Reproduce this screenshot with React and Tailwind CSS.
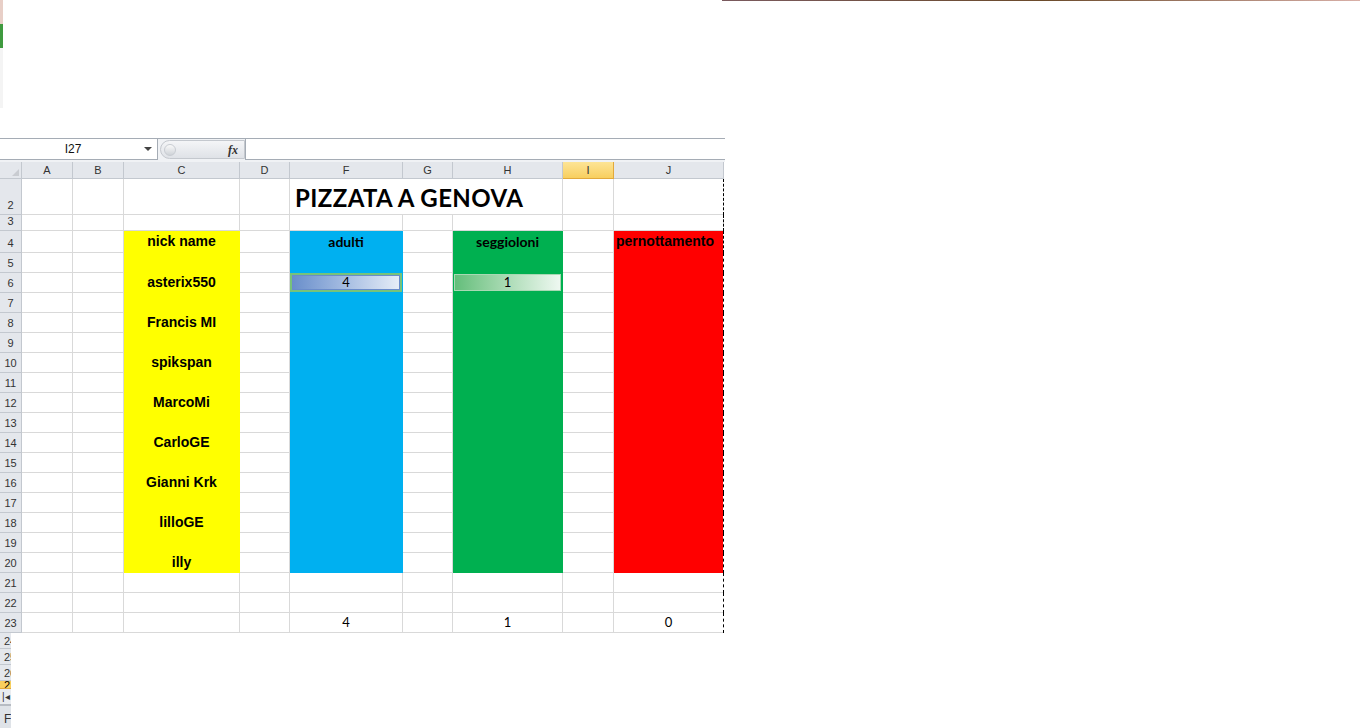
import React from 'react';

const cols = [
  { id: 'A', w: 'w-[51px]' },
  { id: 'B', w: 'w-[51px]' },
  { id: 'C', w: 'w-[116px]' },
  { id: 'D', w: 'w-[50px]' },
  { id: 'F', w: 'w-[113px]' },
  { id: 'G', w: 'w-[50px]' },
  { id: 'H', w: 'w-[110px]' },
  { id: 'I', w: 'w-[51px]' },
  { id: 'J', w: 'w-[110px]' },
];

const fills = {
  C: 'bg-[#ffff00] border-[#ffff00]',
  F: 'bg-[#00b0f0] border-[#00b0f0]',
  H: 'bg-[#00b050] border-[#00b050]',
  J: 'bg-[#ff0000] border-[#ff0000]',
};

const names = {
  4: 'nick name',
  6: 'asterix550',
  8: 'Francis MI',
  10: 'spikspan',
  12: 'MarcoMi',
  14: 'CarloGE',
  16: 'Gianni Krk',
  18: 'lilloGE',
  20: 'illy',
};

const rows = [{ n: 2, h: 'h-[36px]' }, { n: 3, h: 'h-[16px]' }, { n: 4, h: 'h-[22px]' }];
for (let n = 5; n <= 23; n++) rows.push({ n, h: 'h-[20px]' });

const calibri = { fontFamily: 'Lato, "Open Sans", sans-serif' };
const arial = { fontFamily: '"Liberation Sans", Arial, sans-serif' };

function RowHeader({ n, h }) {
  return (
    <div
      className={`${h} w-[22px] shrink-0 flex items-end justify-center pb-[1px] bg-[#e4e7ec] border-r border-b border-[#c3c8cf] text-[11px] text-[#333]`}
      style={arial}
    >
      {n}
    </div>
  );
}

function cellContent(col, n) {
  if (col === 'C' && names[n]) {
    return (
      <span className="text-[14px] font-bold text-black" style={arial}>
        {names[n]}
      </span>
    );
  }
  if (n === 4 && col === 'F') return <span className="text-[14px] font-bold" style={calibri}>adulti</span>;
  if (n === 4 && col === 'H') return <span className="text-[14px] font-bold" style={calibri}>seggioloni</span>;
  if (n === 6 && col === 'F') {
    return (
      <div className="w-full h-full border-2 border-[#77c27a]">
        <div className="w-full h-full border border-[#6a8ccb] bg-gradient-to-r from-[#6a8fcb] to-[#e6edf7] flex items-center justify-center text-[13px]" style={calibri}>
          4
        </div>
      </div>
    );
  }
  if (n === 6 && col === 'H') {
    return (
      <div className="w-full h-full p-[1px]">
        <div className="w-full h-full border border-[#a8d9b3] bg-gradient-to-r from-[#63be7b] to-[#eef8f1] flex items-center justify-center text-[13px]" style={calibri}>
          1
        </div>
      </div>
    );
  }
  if (n === 23 && col === 'F') return <span className="text-[13px]" style={calibri}>4</span>;
  if (n === 23 && col === 'H') return <span className="text-[13px]" style={calibri}>1</span>;
  if (n === 23 && col === 'J') return <span className="text-[13px]" style={calibri}>0</span>;
  return null;
}

function Row({ n, h }) {
  if (n === 2) {
    return (
      <div className="flex">
        <RowHeader n={n} h={h} />
        <div className={`${h} w-[51px] border-r border-b border-[#d9d9d9]`} />
        <div className={`${h} w-[51px] border-r border-b border-[#d9d9d9]`} />
        <div className={`${h} w-[116px] border-r border-b border-[#d9d9d9]`} />
        <div className={`${h} w-[50px] border-r border-b border-[#d9d9d9]`} />
        <div className={`${h} w-[273px] border-r border-b border-[#d9d9d9] flex items-center pl-[5px] pt-[2px]`}>
          <span className="text-[24px] font-bold text-black tracking-[0.4px]" style={calibri}>
            PIZZATA A GENOVA
          </span>
        </div>
        <div className={`${h} w-[51px] border-r border-b border-[#d9d9d9]`} />
        <div className={`${h} w-[109px] border-b border-[#d9d9d9]`} />
        <div className={`${h} w-0 border-l border-dashed border-black`} />
      </div>
    );
  }
  return (
    <div className="flex">
      <RowHeader n={n} h={h} />
      {cols.map((c) => {
        const filled = fills[c.id] && n >= 4 && n <= 20;
        const base = filled ? fills[c.id] : 'border-[#d9d9d9]';
        const w = c.id === 'J' ? 'w-[109px]' : c.w;
        const br = c.id === 'J' ? '' : 'border-r';
        if (c.id === 'J' && n === 4) {
          return (
            <div key={c.id} className={`${h} ${w} ${base} border-b overflow-hidden flex items-center pl-[2px]`}>
              <span className="text-[14px] font-bold whitespace-nowrap" style={arial}>pernottamento</span>
            </div>
          );
        }
        return (
          <div key={c.id} className={`${h} ${w} ${base} ${br} border-b flex items-center justify-center`}>
            {cellContent(c.id, n)}
          </div>
        );
      })}
      <div className={`${h} w-0 border-l border-dashed border-black`} />
    </div>
  );
}

export default function App() {
  return (
    <div className="w-[1360px] h-[728px] bg-white overflow-hidden flex flex-col" style={arial}>
      {/* window remnants at the top */}
      <div className="h-[138px] flex">
        <div className="w-[3px] flex flex-col">
          <div className="h-[24px] bg-[#e8cfc7]" />
          <div className="h-[24px] bg-[#3f9a3f]" />
          <div className="h-[60px] bg-[#f4f4f4]" />
        </div>
        <div className="w-[719px]" />
        <div className="w-[638px] h-px bg-gradient-to-r from-[#7a5a5e] via-[#6b4a2a] to-[#d9b0a8]" />
      </div>

      {/* formula bar */}
      <div className="w-[725px] h-[24px] flex border-t border-[#a5acb5] bg-[#f0f2f5]">
        <div className="w-[158px] h-[21px] bg-white border-r border-b border-[#a5acb5] flex items-center">
          <span className="flex-1 text-center text-[12px] text-[#111] pl-[2px]">I27</span>
          <span className="w-0 h-0 border-l-[4px] border-r-[4px] border-t-[4px] border-l-transparent border-r-transparent border-t-[#444] mr-[5px]" />
        </div>
        <div className="w-[87px] h-[21px] flex items-center pl-[2px]">
          <div className="flex-1 h-[19px] rounded-l-full bg-gradient-to-b from-[#f4f5f7] to-[#dfe2e7] border border-[#c4c8ce] flex items-center justify-between pl-[3px] pr-[6px]">
            <span className="w-[12px] h-[12px] rounded-full bg-gradient-to-b from-[#fafafa] to-[#cfd3d8] border border-[#c8ccd2]" />
            <span className="text-[12px] italic font-bold text-[#333]" style={{ fontFamily: '"Liberation Serif", serif' }}>fx</span>
          </div>
        </div>
        <div className="flex-1 h-[21px] bg-white border-l border-b border-[#a5acb5]" />
      </div>

      {/* column headers */}
      <div className="flex">
        <div className="h-[17px] w-[22px] bg-[#e4e7ec] border-r border-b border-[#c3c8cf] flex items-end justify-end p-[2px]">
          <span className="w-0 h-0 border-l-[7px] border-b-[7px] border-l-transparent border-b-[#c9ccd1]" />
        </div>
        {cols.map((c) => (
          <div
            key={c.id}
            className={
              c.id === 'I'
                ? `h-[17px] ${c.w} bg-gradient-to-b from-[#fde495] to-[#f8cf5e] border-r border-b border-[#e2a93c] flex items-center justify-center text-[11px] text-[#333]`
                : `h-[17px] ${c.w} bg-[#e4e7ec] border-r border-b border-[#c3c8cf] flex items-center justify-center text-[11px] text-[#333]`
            }
          >
            {c.id}
          </div>
        ))}
      </div>

      {/* grid */}
      <div className="flex flex-col">
        {rows.map((r) => (
          <Row key={r.n} n={r.n} h={r.h} />
        ))}
      </div>

      {/* hidden rows strip */}
      <div className="w-[11px] flex-1 overflow-hidden flex flex-col">
        {[24, 25, 26].map((n) => (
          <div key={n} className="h-[16px] bg-[#e4e7ec] border-b border-[#c3c8cf] text-[11px] text-[#333] pl-[4px] leading-[16px]">
            {n}
          </div>
        ))}
        <div className="h-[8px] bg-[#f8cf5e] border-b border-[#e2a93c] text-[11px] leading-[8px] pl-[4px] overflow-hidden">2</div>
        <div className="h-[16px] bg-[#e9ecf0] border-b border-[#b7bcc3] text-[10px] pl-[2px] leading-[16px] text-[#333]">|◂</div>
        <div className="flex-1 bg-[#dfe3e8] border-t border-[#b7bcc3] text-[12px] pl-[4px] pt-[4px] text-[#333]">F</div>
      </div>
    </div>
  );
}
